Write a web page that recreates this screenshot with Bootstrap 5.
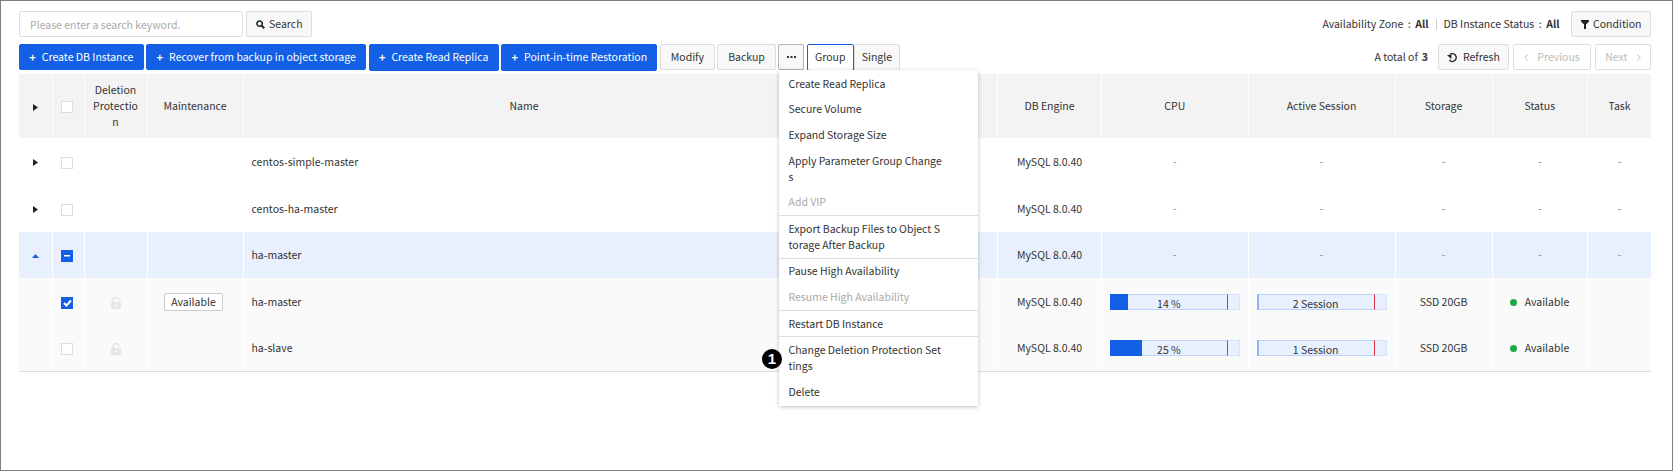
<!DOCTYPE html>
<html lang="en">
<head>
  <meta charset="UTF-8" />
  <title>DB Instance</title>
  <link href="https://cdn.jsdelivr.net/npm/bootstrap@5.3.2/dist/css/bootstrap.min.css" rel="stylesheet" />
  <style>
    body {
      font-family: "Noto Sans CJK KR", "Noto Sans", sans-serif;
      font-size: 10.5px;
      color: #333;
      background: #fff;
      overflow: hidden;
    }
    .frame {
      height: 471px;
      border: 1px solid #7d7d7d;
      padding: 10px 21px 0 18px;
      position: relative;
    }
    .toolbar-top { height: 26px; margin-bottom: 7px; gap: 3px; }
    .toolbar-main { height: 27px; margin-bottom: 3px; gap: 2.6px; }
    .search-input {
      width: 224px; height: 26px; border: 1px solid #ddd; border-radius: 2px;
      font-size: 10.5px; padding: 0 10px; color: #333; outline: 0;
    }
    .search-input::placeholder { color: #aaa; }
    .tbtn {
      height: 26px; padding: 0 10.5px; border: 1px solid #ddd; border-radius: 2px;
      background: #f8f8f8; color: #333; font-size: 10.5px; line-height: 1;
      display: inline-flex; align-items: center; justify-content: center; gap: 5.5px; white-space: nowrap;
    }
    .tbtn.tall { height: 27px; }
    .tbtn.snug { padding: 0 8.5px; gap: 4.5px; }
    .tbtn.act { padding: 0 9.8px; }
    .tbtn.seg { padding: 0 7.2px; }
    .tbtn.blue { background: #1360e6; border-color: #1360e6; color: #fff; padding: 0 9.3px; gap: 6px; }
    .tbtn.off { color: #bbb; background: #fff; gap: 9px; }
    .tbtn.nxt { padding: 0 9.5px; }
    .tbtn.group-on { background: #fff; border-color: #1360e6; }
    .tbtn.dots { padding: 0; width: 26px; border-color: #b5b5b5; }
    .plus { font-weight: 700; font-size: 11px; }
    .db-table { table-layout: fixed; width: 1632px; border-collapse: collapse; margin: 0; }
    .db-table th, .db-table td {
      padding: 0 8px; text-align: center; vertical-align: middle; font-weight: 400;
      border-right: 1px solid #fff; font-size: 10.5px; line-height: 16px; color: #333;
      word-break: break-all;
    }
    .db-table th:last-child, .db-table td:last-child { border-right: 0; }
    .db-table th { background: #f3f3f3; height: 64px; }
    .db-table td { height: 47px; }
    .db-table td.lft { text-align: left; }
    .db-table tr.picked td { background: #e8f0fd; height: 46px; }
    .db-table tr.sub td { background: #fafafa; }
    .db-table tr:last-child td { height: 46px; border-bottom: 1px solid #ddd; }
    .db-table .dash { color: #888; position: relative; top: -1px; }
    .chk {
      width: 12px; height: 12px; border: 1px solid #ddd; background: #fff; margin-right: 2px;
      display: inline-flex; align-items: center; justify-content: center; vertical-align: middle;
    }
    .chk.on { background: #1360e6; border-color: #1360e6; }
    .state-tag {
      display: inline-block; border: 1px solid #ccc; border-radius: 2px; padding: 0 6.5px;
      line-height: 16px; background: #fff; position: relative; left: -1.5px;
    }
    .meter { height: 16px; background: #e8f0fd; box-shadow: inset 0 0 0 1px #d5e3fb; position: relative; }
    .meter-in {
      height: 16px; width: 91%; position: relative; text-align: center; line-height: 18px;
      border: 1px solid #bcd2f8; border-right: 1px solid #dc3545;
    }
    .meter-fill { position: absolute; left: -1px; top: -1px; bottom: -1px; background: #1360e6; }
    .meter-fill.thin { width: 2px; background: #8fb3f2; }
    .meter-text { position: relative; }
    .dot { width: 7px; height: 7px; border-radius: 50%; background: #22a546; display: inline-block; margin-right: 7.5px; vertical-align: -0.5px; }
    .more-menu {
      position: absolute; left: 778px; top: 69px; width: 199px; background: #fff;
      box-shadow: 0 1px 4px rgba(0,0,0,.25); padding: 1px 0; z-index: 5; list-style: none; margin: 0;
    }
    .more-menu li { padding: 4.8px 36px 4.8px 9.5px; line-height: 16px; word-break: break-all; }
    .more-menu li.sep { border-top: 1px solid #ddd; }
    .more-menu li.off { color: #aaa; }
    .callout {
      position: absolute; left: 761px; top: 348px; width: 20px; height: 20px; border-radius: 50%;
      background: #000; color: #fff; font: 700 15px/20px "Liberation Sans", sans-serif; text-align: center; z-index: 6;
    }
    .filter-text b { font-weight: 700; }
    .colon { margin: 0 4.5px; }
    .filter-sep { width: 1px; height: 11px; background: #ccc; margin: 0 7px; }
    .cond-btn { margin-left: 11.5px; }
    .total-txt { margin-right: 6.5px; }
    .total-txt b { margin-left: 1.5px; }
  </style>
</head>
<body>
<div class="frame">
  <div class="toolbar-top d-flex align-items-center">
    <input class="search-input" type="text" placeholder="Please enter a search keyword." />
    <button class="tbtn snug">
      <svg width="9" height="9" viewBox="0 0 10 10"><circle cx="4" cy="4" r="3" fill="none" stroke="#222" stroke-width="1.7"/><path d="M6.2 6.2 9.2 9.2" stroke="#222" stroke-width="2.2"/></svg>
      Search
    </button>
    <div class="ms-auto d-flex align-items-center filter-text">
      <span>Availability Zone<span class="colon">:</span><b>All</b></span>
      <span class="filter-sep"></span>
      <span>DB Instance Status<span class="colon">:</span><b>All</b></span>
      <button class="tbtn snug cond-btn">
        <svg width="8" height="9" viewBox="0 0 8 9"><path d="M0 0h8v1.5L5 4.5V9H3V4.5L0 1.5z" fill="#222"/></svg>
        Condition
      </button>
    </div>
  </div>
  <div class="toolbar-main d-flex align-items-start">
    <button class="tbtn blue"><span class="plus">+</span> <span>Create DB Instance</span></button>
    <button class="tbtn blue"><span class="plus">+</span> <span>Recover from backup in object storage</span></button>
    <button class="tbtn blue tall"><span class="plus">+</span> <span>Create Read Replica</span></button>
    <button class="tbtn blue tall"><span class="plus">+</span> <span>Point-in-time Restoration</span></button>
    <button class="tbtn act">Modify</button>
    <button class="tbtn act">Backup</button>
    <button class="tbtn dots">
      <svg width="9" height="2" viewBox="0 0 9 2"><path d="M0 0h2v2H0zM3.5 0h2v2h-2zM7 0h2v2H7z" fill="#333"/></svg>
    </button>
    <div class="d-flex">
      <button class="tbtn tall seg group-on">Group</button>
      <button class="tbtn tall seg">Single</button>
    </div>
    <div class="ms-auto d-flex align-items-center" style="gap:3.5px">
      <span class="total-txt"><span>A total of</span> <b>3</b></span>
      <button class="tbtn snug">
        <svg width="11" height="11" viewBox="0 0 12 12"><path d="M3.2 2.8a4.2 4.2 0 1 1-.6 6" fill="none" stroke="#222" stroke-width="1.6"/><path d="M0 3.2h4.8v4.6z" fill="#222"/></svg>
        Refresh
      </button>
      <button class="tbtn off"><svg width="4" height="7" viewBox="0 0 4 7"><path d="M3.5.5.8 3.5l2.7 3" fill="none" stroke="#bbb"/></svg>Previous</button>
      <button class="tbtn off nxt"><span>Next</span><svg width="4" height="7" viewBox="0 0 4 7"><path d="M.5.5l2.7 3-2.7 3" fill="none" stroke="#bbb"/></svg></button>
    </div>
  </div>
  <table class="db-table">
    <colgroup>
      <col style="width:33px"><col style="width:32px"><col style="width:63px"><col style="width:96px">
      <col style="width:562px"><col style="width:192.5px"><col style="width:104px"><col style="width:146.5px"><col style="width:147px">
      <col style="width:97px"><col style="width:95.5px"><col style="width:63.5px">
    </colgroup>
    <thead>
      <tr>
        <th><svg width="5" height="7" viewBox="0 0 5 7"><path d="M0 0l5 3.5L0 7z" fill="#222"/></svg></th>
        <th><span class="chk"></span></th>
        <th>Deletion Protection</th>
        <th>Maintenance</th>
        <th>Name</th>
        <th></th>
        <th>DB Engine</th>
        <th>CPU</th>
        <th>Active Session</th>
        <th>Storage</th>
        <th>Status</th>
        <th>Task</th>
      </tr>
    </thead>
    <tbody id="rows"></tbody>
  </table>
  <ul class="more-menu">
    <li>Create Read Replica</li>
    <li>Secure Volume</li>
    <li>Expand Storage Size</li>
    <li>Apply Parameter Group Changes</li>
    <li class="off">Add VIP</li>
    <li class="sep">Export Backup Files to Object Storage After Backup</li>
    <li class="sep">Pause High Availability</li>
    <li class="off">Resume High Availability</li>
    <li class="sep">Restart DB Instance</li>
    <li class="sep">Change Deletion Protection Settings</li>
    <li>Delete</li>
  </ul>
  <div class="callout">1</div>
</div>
<script>
  const arrowR = '<svg width="5" height="7" viewBox="0 0 5 7"><path d="M0 0l5 3.5L0 7z" fill="#222"/></svg>';
  const arrowU = '<svg width="7" height="4" viewBox="0 0 7 4"><path d="M0 4l3.5-4L7 4z" fill="#1360e6"/></svg>';
  const lock = '<svg width="10" height="12" viewBox="0 0 10 12"><path d="M2 5.5V3.4a3 3 0 0 1 6 0" fill="none" stroke="#e6e6e6" stroke-width="1.6"/><rect y="5" width="10" height="7" fill="#e6e6e6"/><rect x="4" y="7.5" width="2" height="2" fill="#fafafa"/></svg>';
  const meter = (pct, text) => `<div class="meter"><div class="meter-in"><span class="meter-fill ${pct ? '' : 'thin'}" ${pct ? `style="width:${pct}%"` : ''}></span><span class="meter-text">${text}</span></div></div>`;
  const chk = { none: '<span class="chk"></span>',
    mixed: '<span class="chk on"><svg width="6" height="2"><rect width="6" height="1.5" fill="#fff"/></svg></span>',
    on: '<span class="chk on"><svg width="9" height="8" viewBox="0 0 9 8"><path d="M1 4l2.5 2.5L8 1.5" fill="none" stroke="#fff" stroke-width="2"/></svg></span>' };
  const data = [
    { a: arrowR, c: chk.none, n: 'centos-simple-master' },
    { a: arrowR, c: chk.none, n: 'centos-ha-master' },
    { a: arrowU, c: chk.mixed, n: 'ha-master', cls: 'picked' },
    { c: chk.on, n: 'ha-master', cls: 'sub', m: '<span class="state-tag">Available</span>', cpu: [15.4, '14 %'], ses: [0, '2 Session'] },
    { c: chk.none, n: 'ha-slave', cls: 'sub', cpu: [27.6, '25 %'], ses: [0, '1 Session'] }
  ];
  const dash = '<span class="dash">-</span>';
  document.getElementById('rows').innerHTML = data.map(r => `<tr class="${r.cls || ''}">
    <td>${r.a || ''}</td><td>${r.c}</td><td>${r.cpu ? lock : ''}</td><td>${r.m || ''}</td>
    <td class="lft">${r.n}</td><td></td><td>MySQL 8.0.40</td>
    <td>${r.cpu ? meter(r.cpu[0], r.cpu[1]) : dash}</td>
    <td>${r.ses ? meter(r.ses[0], r.ses[1]) : dash}</td>
    <td>${r.cpu ? 'SSD 20GB' : dash}</td>
    <td>${r.cpu ? '<span class="dot"></span>Available' : dash}</td>
    <td>${r.cpu ? '' : dash}</td></tr>`).join('');
</script>
<script src="https://cdn.jsdelivr.net/npm/bootstrap@5.3.2/dist/js/bootstrap.bundle.min.js"></script>
</body>
</html>
